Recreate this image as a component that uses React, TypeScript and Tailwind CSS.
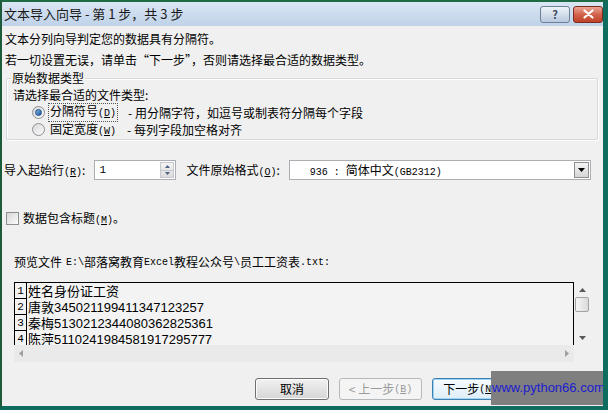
import React from 'react';

const cjk = { fontFamily: '"Noto Sans CJK SC", "Liberation Sans", sans-serif' };
const mono = { fontFamily: '"Liberation Mono", monospace' };

function Radio({ checked }: { checked?: boolean }) {
  return (
    <span className="flex h-[13px] w-[13px] items-center justify-center rounded-full border border-[#8c9196] bg-gradient-to-br from-[#d8d8d8] to-[#fbfbfb]">
      {checked && (
        <span className="h-[7px] w-[7px] rounded-full border border-[#1f4f8a] bg-gradient-to-br from-[#7fb3e8] to-[#1c5aa0]" />
      )}
    </span>
  );
}

function Btn({ children, kind }: { children: React.ReactNode; kind?: 'disabled' | 'focus' }) {
  const cls =
    kind === 'disabled'
      ? 'border-[#b5b9bc] bg-[#f4f4f4] text-[#9a9a9a]'
      : kind === 'focus'
      ? 'border-[#3c7fb1] bg-gradient-to-b from-[#f6fbfe] to-[#dfeef8] text-black shadow-[inset_0_0_0_1px_#9fd4f2]'
      : 'border-[#707070] bg-gradient-to-b from-[#f2f2f2] to-[#d6d6d6] text-black shadow-[inset_0_0_0_1px_#fcfcfc]';
  return (
    <div className={`flex h-[22px] items-center justify-center rounded-[3px] border text-[12px] ${cls}`}>{children}</div>
  );
}

const rows = [
  ['1', '姓名身份证工资'],
  ['2', '唐敦345021199411347123257'],
  ['3', '秦梅5130212344080362825361'],
  ['4', '陈萍5110241984581917295777'],
];

export default function App() {
  return (
    <div
      className="relative h-[410px] w-[608px] overflow-hidden border-t-2 border-l-2 border-r-[5px] border-b-[4px] border-t-[#1e6a45] border-l-[#1d5c3a] border-r-[#0f6d60] border-b-[#0f6d60] bg-[#f0f0f0] text-black"
      style={cjk}
    >
      {/* title bar */}
      <div className="flex h-[24px] items-center justify-between bg-gradient-to-b from-[#dae6f3] to-[#bfd2e8] pl-[2px]">
        <span className="text-[13px] text-[#1a1a1a]">文本导入向导 - 第 1 步，共 3 步</span>
        <div className="flex gap-[3px]">
          <div className="flex h-[17px] w-[30px] items-center justify-center rounded-[3px] border border-[#6e7f99] bg-gradient-to-b from-[#eef3f9] to-[#b9c9dd] text-[11px] font-bold text-[#3b4a60]">
            ?
          </div>
          <div className="flex h-[17px] w-[30px] items-center justify-center rounded-[3px] border border-[#7a2c22] bg-gradient-to-b from-[#e9a596] via-[#d2634c] to-[#c04026]">
            <svg width="11" height="10" viewBox="0 0 11 10">
              <path d="M1.5 1.5 L9.5 8.5 M9.5 1.5 L1.5 8.5" stroke="#fff" strokeWidth="2.2" strokeLinecap="round" />
            </svg>
          </div>
        </div>
      </div>

      {/* intro */}
      <div className="pt-[2px] pl-[3px] text-[12px] leading-[21px]">
        <div>文本分列向导判定您的数据具有分隔符。</div>
        <div>若一切设置无误，请单击“下一步”，否则请选择最合适的数据类型。</div>
      </div>

      {/* group */}
      <fieldset className="ml-[4px] w-[592px] rounded-[2px] border border-[#d5d9dc] pb-[1px] shadow-[inset_1px_1px_0_#fff,1px_1px_0_#fff]">
        <legend className="ml-[4px] px-[1px] text-[12px] leading-[16px]">原始数据类型</legend>
        <div className="pl-[6px] text-[12px] leading-[18px]">请选择最合适的文件类型:</div>
        <div className="flex h-[17px] items-center text-[12px]">
          <span className="ml-[25px]">
            <Radio checked />
          </span>
          <span className="ml-[3px] border border-dotted border-[#555] px-[1px] leading-[14px]">
            分隔符号<span style={mono} className="text-[10px]">(<span className="underline">D</span>)</span>
          </span>
          <span className="ml-[10px]">- 用分隔字符，如逗号或制表符分隔每个字段</span>
        </div>
        <div className="flex h-[17px] items-center text-[12px]">
          <span className="ml-[25px]">
            <Radio />
          </span>
          <span className="ml-[4px] px-[1px]">
            固定宽度<span style={mono} className="text-[10px]">(<span className="underline">W</span>)</span>
          </span>
          <span className="ml-[10px]">- 每列字段加空格对齐</span>
        </div>
      </fieldset>

      {/* start row / encoding */}
      <div className="mt-[20px] flex h-[20px] items-center pl-[2px] text-[12px]">
        <span>
          导入起始行<span style={mono} className="text-[10px]">(<span className="underline">R</span>)</span>:
        </span>
        <div className="ml-[9px] flex h-[20px] w-[82px] items-center justify-between border border-[#abadb3] bg-white pl-[4px] pr-[1px]">
          <span style={mono} className="text-[11px]">1</span>
          <div className="flex h-[16px] w-[14px] flex-col border border-[#c5c8cc] bg-gradient-to-b from-[#f4f4f4] to-[#dcdcdc]">
            <div className="flex flex-1 items-center justify-center border-b border-[#c5c8cc]">
              <svg width="5" height="3" viewBox="0 0 5 3"><path d="M0 3 L2.5 0 L5 3Z" fill="#4d6185" /></svg>
            </div>
            <div className="flex flex-1 items-center justify-center">
              <svg width="5" height="3" viewBox="0 0 5 3"><path d="M0 0 L2.5 3 L5 0Z" fill="#4d6185" /></svg>
            </div>
          </div>
        </div>
        <span className="ml-[10px]">
          文件原始格式<span style={mono} className="text-[10px]">(<span className="underline">O</span>)</span>:
        </span>
        <div className="ml-[9px] flex h-[20px] w-[302px] items-center justify-between border border-[#abadb3] bg-white pr-[1px]">
          <span className="pl-[20px] text-[12px]">
            <span style={mono} className="text-[10px]">936 : </span>简体中文<span style={mono} className="text-[10px]">(GB2312)</span>
          </span>
          <div className="flex h-[16px] w-[15px] items-center justify-center border border-[#8f8f8f] bg-gradient-to-b from-[#f4f4f4] to-[#d6d6d6]">
            <svg width="7" height="4" viewBox="0 0 7 4"><path d="M0 0 L3.5 4 L7 0Z" fill="#000" /></svg>
          </div>
        </div>
      </div>

      {/* header checkbox */}
      <div className="mt-[29px] flex h-[18px] items-center pl-[4px] text-[12px]">
        <span className="h-[13px] w-[13px] border border-[#8e8f8f] bg-gradient-to-br from-[#d6d6d6] to-[#fdfdfd]" />
        <span className="ml-[4px]">
          数据包含标题<span style={mono} className="text-[10px]">(<span className="underline">M</span>)</span>。
        </span>
      </div>

      {/* preview label */}
      <div className="mt-[26px] flex h-[18px] items-center pl-[12px] text-[12px]">
        预览文件 <span style={mono} className="ml-[4px] text-[10px]">E:\</span>部落窝教育<span style={mono} className="text-[10px]">Excel</span>教程公众号<span style={mono} className="text-[10px]">\</span>员工工资表<span style={mono} className="text-[10px]">.txt:</span>
      </div>

      {/* preview */}
      <div className="ml-[12px] mt-[11px] flex h-[80px] w-[576px]">
        <div className="flex w-[560px] flex-col">
          <div className="h-[63px] overflow-hidden border-t border-l border-r border-black bg-[#f3f3f3]">
            {rows.map(([n, t]) => (
              <div key={n} className="flex h-[16px]">
                <div className="flex w-[12px] shrink-0 items-end justify-center border-r border-b border-black text-[11px] leading-[13px]" style={mono}>
                  {n}
                </div>
                <div className="pl-[1px] text-[13px] leading-[17px]" style={{ fontFamily: '"Liberation Sans", "Noto Sans CJK SC", sans-serif' }}>
                  {t}
                </div>
              </div>
            ))}
          </div>
          <div className="flex h-[17px] items-center justify-between bg-[#eaeaea] px-[5px]">
            <svg width="4" height="7" viewBox="0 0 4 7"><path d="M4 0 L0 3.5 L4 7Z" fill="#a0a0a0" /></svg>
            <svg width="4" height="7" viewBox="0 0 4 7"><path d="M0 0 L4 3.5 L0 7Z" fill="#a0a0a0" /></svg>
          </div>
        </div>
        <div className="flex w-[16px] flex-col items-center pt-[6px]">
          <svg width="7" height="4" viewBox="0 0 7 4"><path d="M0 4 L3.5 0 L7 4Z" fill="#5a5a5a" /></svg>
          <div className="mt-[5px] h-[15px] w-[14px] rounded-[2px] border border-[#a3a3a3] bg-gradient-to-r from-[#f6f6f6] to-[#dadada]" />
          <div className="flex-1" />
          <svg className="mb-[22px]" width="7" height="4" viewBox="0 0 7 4"><path d="M0 0 L3.5 4 L7 0Z" fill="#5a5a5a" /></svg>
        </div>
      </div>

      {/* buttons */}
      <div className="mt-[16px] flex gap-[10px] pl-[253px]">
        <div className="w-[74px]"><Btn>取消</Btn></div>
        <div className="w-[83px]">
          <Btn kind="disabled">
            &lt; 上一步<span style={mono} className="text-[10px]">(<span className="underline">B</span>)</span>
          </Btn>
        </div>
        <div className="w-[83px]">
          <Btn kind="focus">
            下一步<span style={mono} className="text-[10px]">(<span className="underline">N</span>)</span> &gt;
          </Btn>
        </div>
      </div>

      {/* watermark */}
      <div className="absolute left-[489px] top-[369px] flex h-[34px] w-[112px] items-center bg-[#7f7f7f] pl-[1px]">
        <span className="text-[13px] text-[#1c1cd0]" style={{ fontFamily: '"Liberation Sans", sans-serif' }}>
          www.python66.com
        </span>
      </div>
    </div>
  );
}
